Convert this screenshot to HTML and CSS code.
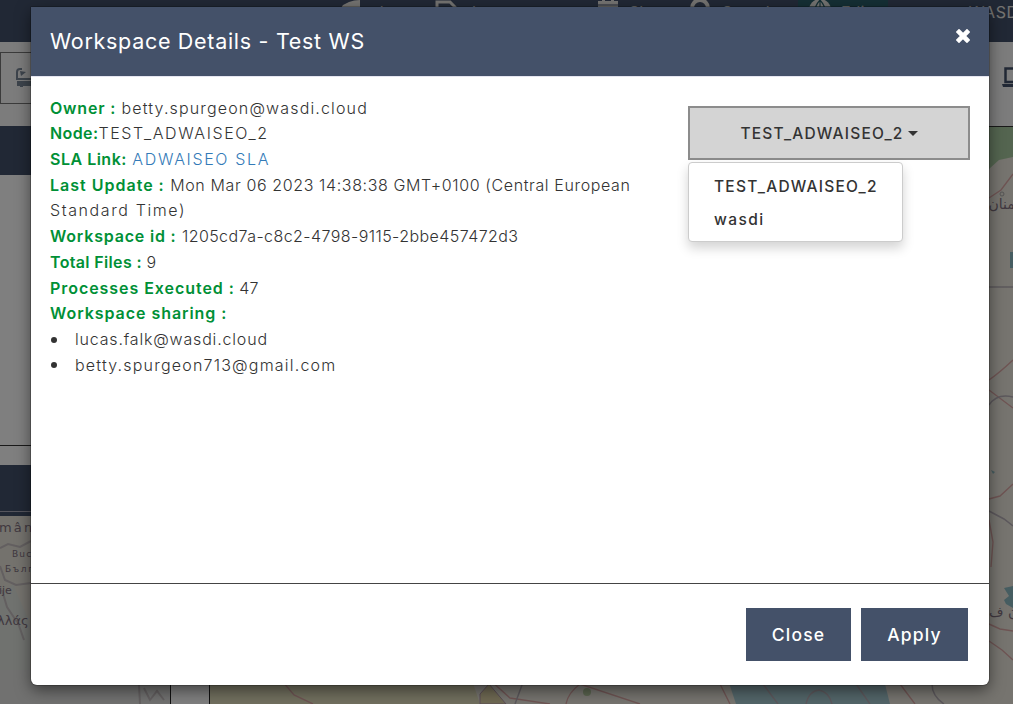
FILE: index.html
```html
<!DOCTYPE html>
<html lang="en">
<head>
<meta charset="utf-8">
<title>Workspace Details</title>
<link rel="stylesheet" href="styles.css">
</head>
<body>
<div class="app">
  <nav class="navbar">
    <span class="nav-item plan"><svg width="20" height="20" viewBox="0 0 20 20"><path d="M20 0V7L13 13L9 8L1 8L3 5L9 2Q14 0 20 0Z" fill="currentColor"/></svg>plan</span>
    <span class="nav-item jupyter"><svg width="22" height="20" viewBox="0 0 22 20"><path d="M2 17V2H15L20 7V17Z" fill="none" stroke="currentColor" stroke-width="3"/></svg>Jupyter</span>
    <span class="nav-item style"><svg width="22" height="20" viewBox="0 0 22 20"><path d="M1 1H21V4.500H1ZM1 5.500H21V19H1ZM5 0H8V4H5ZM14 0H17V4H14Z" fill="currentColor"/></svg>Share</span>
    <span class="nav-item search"><svg width="22" height="20" viewBox="0 0 22 20"><circle cx="10" cy="8" r="8" fill="none" stroke="currentColor" stroke-width="4"/></svg>Search</span>
    <span class="nav-item edit"><svg width="22" height="22" viewBox="0 0 22 22"><circle cx="11" cy="10" r="11" fill="currentColor"/><path d="M0 7H22M0 15H22M11 0V22M11 0Q1 11 11 22M11 0Q21 11 11 22" fill="none" stroke="#2a5f6b" stroke-width="1.2"/></svg>Edit</span>
    <span class="nav-item user">test - WASDI</span>
  </nav>
  <div class="columns">
    <aside class="side">
      <div class="toolbar"><div class="tool"><svg width="30" height="22" viewBox="0 0 30 22"><path d="M1 12V4Q1 1 4 1H6" fill="none" stroke="#7b8899" stroke-width="2"/><path d="M4 3L10 4L5 8ZM0 10H30V12H0ZM1 13H29V18H26V19H23V18H7V19H4V18H1Z" fill="#7b8899"/></svg></div></div>
      <div class="panel-head"></div>
      <div class="panel-body"></div>
      <div class="mini-head"></div>
      <svg class="mini-map" width="170" height="188" viewBox="0 516 170 188">
        <rect y="516" width="170" height="188" fill="#e8e4da"/>
        <path d="M0 596L13 584L18 596L30 623V704H0Z" fill="#e0e4df"/>
        <path d="M0 670H170V704H0Z" fill="#e2e3e1"/>
        <g fill="none" stroke="#c6bfc0" stroke-width="2"><path d="M0 548L8 544L20 547L31 541"/><path d="M0 566L5 580L16 585L31 583"/><path d="M2 590L7 607L17 622M17 620L24 640M139 685L140 704M144 688L150 700L157 691L164 700"/></g>
        <g class="map-label"><text x="-1" y="532" font-size="13" textLength="39">mâni</text><text x="12" y="557" font-size="9" textLength="26">Bucu</text><text x="5" y="572" font-size="9" textLength="28">Бълг</text><text x="-1" y="594" font-size="11">ije</text><text x="-3" y="625" font-size="13">λλάς</text></g>
      </svg>
    </aside>
    <main class="main">
      <div class="main-tools"><svg width="30" height="22" viewBox="0 0 30 22"><path d="M3.500 15V1.500H26.500V15Z" fill="none" stroke="#43516a" stroke-width="2.500"/><path d="M0 17H30V20H1Z" fill="#43516a"/></svg></div>
      <svg class="map" width="803" height="577" viewBox="210 127 803 577">
        <rect x="210" y="127" width="803" height="577" fill="#ede9df"/>
        <path d="M989 127H1013V157L999 160L989 169Z" fill="#a9cba1"/>
        <path d="M210 680H472L480 704H210Z" fill="#e3dfbc"/>
        <path d="M480 694L489 684L506 704H480Z" fill="#ded3a6" stroke="#b598aa"/>
        <path d="M728 680H884L890 704H736Z" fill="#a7cbd3"/>
        <circle cx="587" cy="692" r="4" fill="#b5c99e"/>
        <g fill="none" stroke="#dda9a7" stroke-width="1.4"><path d="M283 682L294 695L313 704M490 680L510 698L550 704M566 704Q568 693 580 684L640 704M720 684L730 704M900 684L915 704"/><path d="M989 198L1001 190L1013 174M989 380Q999 373 1013 360M989 390L1013 408M989 499L1000 496L1013 484M989 520L993 542L991 567M989 624L1000 629L1013 631M989 641L1002 650L1013 660"/></g>
        <g fill="none" stroke="#b8b0b8" stroke-width="1.5"><path d="M989 287H1013M989 405Q997 393 1013 397M989 511L1004 519L1013 526M763 684L778 704M856 684L870 704M932 684Q932 696 944 704M806 704Q809 691 819 690Q829 692 832 704M522 685L515 704"/></g>
        <path d="M1010 252H1013V268H1010ZM1004 588L1013 586V608L1006 604L1004 600L1009 596ZM991 470L995 472L993 474Z" fill="#8dbac2"/>
        <circle cx="1002" cy="194" r="2" fill="none" stroke="#aaa"/>
        <g class="map-label"><text x="1027" y="209" font-size="14" text-anchor="end">سمنان</text><text x="989" y="617" font-size="14">تان ف</text></g>
      </svg>
    </main>
  </div>
</div>
<div class="backdrop">
  <section class="modal">
    <header class="modal-header"><h1>Workspace Details - Test WS</h1>
      <svg class="close-icon" width="14" height="14" viewBox="0 0 14 14"><path d="M3 3L11 11M11 3L3 11" stroke="#fff" stroke-width="4.6" stroke-linecap="square"/></svg></header>
    <div class="modal-body">
      <div class="details">
        <div><b class="l1">Owner :</b> <span class="v1">betty.spurgeon@wasdi.cloud</span></div>
        <div><b class="l2">Node:</b><span class="v2">TEST_ADWAISEO_2</span></div>
        <div><b class="l3">SLA Link:</b> <a class="v3">ADWAISEO SLA</a></div>
        <div><b class="l4">Last Update :</b> <span class="v4">Mon Mar 06 2023 14:38:38 GMT+0100 (Central European</span><br><span class="v5">Standard Time)</span></div>
        <div><b class="l6">Workspace id :</b> <span class="v6">1205cd7a-c8c2-4798-9115-2bbe457472d3</span></div>
        <div><b class="l7">Total Files :</b> <span class="v7">9</span></div>
        <div><b class="l8">Processes Executed :</b> <span class="v8">47</span></div>
        <div><b class="l9">Workspace sharing :</b></div>
        <ul><li class="s1">lucas.falk@wasdi.cloud</li><li class="s2">betty.spurgeon713@gmail.com</li></ul>
      </div>
      <div class="dropdown">
        <button class="select"><span>TEST_ADWAISEO_2</span><i class="caret"></i></button>
        <div class="menu"><div class="m1">TEST_ADWAISEO_2</div><div class="m2">wasdi</div></div>
      </div>
    </div>
    <footer class="modal-footer"><button class="btn close">Close</button><button class="btn apply">Apply</button></footer>
  </section>
</div>
</body>
</html>
```
FILE: styles.css
```css
* { box-sizing: border-box; }
body { margin: 0; width: 1013px; height: 704px; overflow: hidden; font-family: Inter, "Noto Sans", sans-serif; color: #333; }
.app { width: 1013px; height: 704px; overflow: hidden; background: #fff; }
.navbar { display: flex; height: 42px; padding-left: 340px; background: #43516a; color: #e8e6e2; font-size: 16px; white-space: nowrap; overflow: hidden; }
.nav-item { display: flex; gap: 10px; height: 25px; line-height: 25px; flex: none; }
.plan { width: 95px; }
.jupyter { width: 162px; }
.style { width: 93px; }
.search { width: 108px; }
.edit { width: 90px; padding-left: 11px; background: #2a5f6b; }
.user { width: 140px; padding-left: 32px; letter-spacing: .6px; }
.columns { display: flex; height: 662px; }
.side { width: 171px; border-right: 1px solid #222; }
.toolbar { height: 84px; padding-top: 10px; background: #f8f8f8; }
.tool { height: 52px; border: 1px solid #777; padding: 15px 0 0 15px; }
.panel-head { height: 49px; background: #43516a; }
.panel-body { height: 271px; border-bottom: 1px solid #333; }
.mini-head { height: 51px; margin-top: 19px; background: linear-gradient(#43516a 46px, #aab 46px, #aab 47px, #43516a 47px); }
.mini-map { display: block; }
.main { width: 804px; margin-left: 38px; border-left: 1px solid #222; }
.main-tools { height: 85px; padding: 25px 0 0 792px; border-bottom: 1px solid #333; overflow: hidden; background: #f8f8f8; }
.main-tools svg { display: block; }
.map { display: block; }
.map-label { fill: #81717f; font-family: "DejaVu Sans", sans-serif; }
.backdrop { position: absolute; inset: 0; padding: 7px 24px 19px 31px; background: rgba(0, 0, 0, .5); }
.modal { width: 958px; height: 678px; display: flex; flex-direction: column; background: #fff; border-radius: 1px 1px 6px 6px; box-shadow: 0 5px 15px rgba(0, 0, 0, .5), 0 0 0 1px rgba(0, 0, 0, .2); }
.modal-header { display: flex; justify-content: space-between; height: 70px; padding: 19px 19px 0 19px; background: #445169; border-bottom: 1px solid #e5e5f0; }
h1 { margin: 0; color: #fff; font-size: 21.5px; font-weight: 400; line-height: 30px; letter-spacing: .7px; white-space: nowrap; }
.close-icon { margin-top: 3px; }
.modal-body { display: flex; flex: 1; padding: 18px 19px 0; }
.details { width: 638px; padding-top: .6px; font-size: 16px; font-weight: 300; line-height: 25.7px; letter-spacing: 1px; white-space: nowrap; }
.details b { color: #009036; font-weight: 600; letter-spacing: .7px; }
.details a { color: #337ab7; }
.details .l1 { letter-spacing: .8px; }
.v1 { letter-spacing: 1.15px; }
.details .l2 { letter-spacing: .4px; }
.v2 { letter-spacing: 1.6px; }
.details .l3 { letter-spacing: .5px; }
.v3 { letter-spacing: 1.65px; }
.details .l4 { letter-spacing: 1px; }
.v4 { letter-spacing: .62px; }
.v5 { letter-spacing: 1.6px; }
.details .l6 { letter-spacing: .8px; }
.v6 { letter-spacing: .43px; }
.details .l7 { letter-spacing: .35px; }
.v7 { margin-left: -1px; }
.details .l8 { letter-spacing: .95px; }
.v8 { margin-left: -1px; letter-spacing: 0; }
.details .l9 { letter-spacing: .95px; }
ul { margin: 0; padding: 0; list-style: none; }
ul li { display: flex; align-items: center; gap: 18px; }
ul li::before { content: ""; width: 6px; height: 6px; margin-left: 1px; border-radius: 50%; background: #333; }
.s1 { letter-spacing: .82px; }
.s2 { letter-spacing: 1.2px; }
.dropdown { width: 282px; padding-top: 11px; }
.select { display: flex; align-items: center; justify-content: center; gap: 4px; width: 282px; height: 54px; padding: 0; background: #d4d4d4; border: 2px solid #8c8c8c; color: #333; font: 500 15.5px Inter, sans-serif; letter-spacing: 1.2px; }
.caret { border: 5px solid transparent; border-top-color: #333; border-bottom: 0; }
.menu { width: 215px; height: 80px; margin-top: 2px; padding: 7px 25px; border: 1px solid #ccc; border-radius: 4px; background: #fff; box-shadow: 0 6px 12px rgba(0, 0, 0, .175); font-size: 15.5px; font-weight: 500; line-height: 33px; letter-spacing: 1.25px; }
.m2 { letter-spacing: 1.4px; }
.modal-footer { display: flex; gap: 10px; justify-content: flex-end; height: 102px; padding: 24px 21px 0 0; border-top: 1px solid #444; }
.btn { height: 53px; padding: 0; border: 0; background: #445169; color: #fff; font: 500 17.5px Inter, sans-serif; letter-spacing: 1.2px; }
.close { width: 105px; }
.apply { width: 107px; }
```
